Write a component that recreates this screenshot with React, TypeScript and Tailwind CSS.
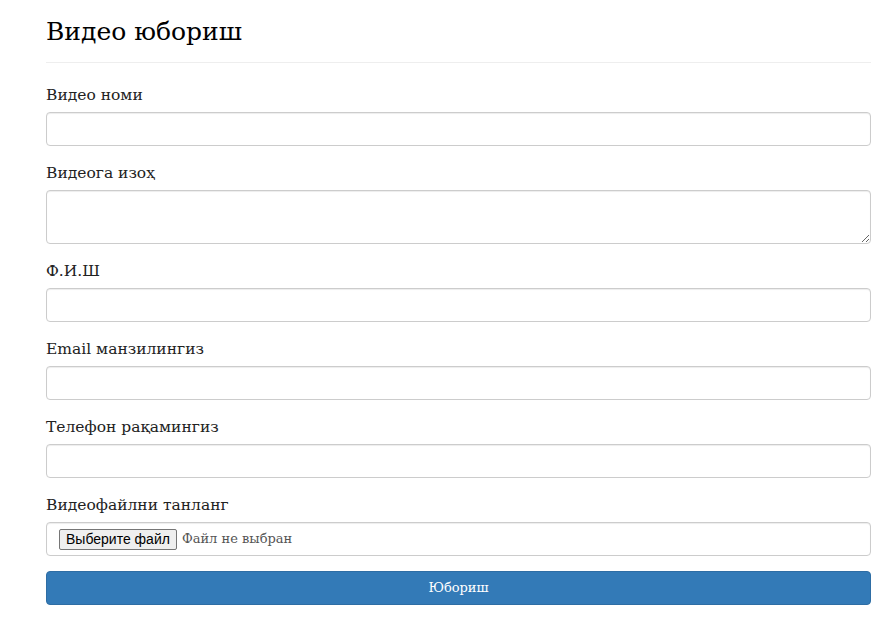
import React from "react";

const serif = { fontFamily: '"DejaVu Serif", "Liberation Serif", serif' };

function Field({ label, children }: { label: string; children: React.ReactNode }) {
  return (
    <div className="mb-[15px]">
      <label className="block mb-[5px] text-[15.5px] leading-[24px] text-[#222]">{label}</label>
      {children}
    </div>
  );
}

const inputCls =
  "block w-full h-[34px] px-3 py-1.5 bg-white border border-[#ccc] rounded-[4px] shadow-[inset_0_1px_1px_rgba(0,0,0,0.075)] text-[14px] text-[#555] outline-none";

export default function App() {
  return (
    <div className="min-h-screen bg-white" style={serif}>
      <div className="pl-[46px] pr-[21px] pt-[15px]">
        <div className="pb-[13px] border-b border-[#eee] mb-[20px]">
          <h2 className="text-[25px] leading-[34px] text-black">Видео юбориш</h2>
        </div>
        <form onSubmit={(e) => e.preventDefault()}>
          <Field label="Видео номи">
            <input type="text" className={inputCls} />
          </Field>
          <Field label="Видеога изоҳ">
            <textarea className="block w-full h-[54px] px-3 py-1.5 bg-white border border-[#ccc] rounded-[4px] shadow-[inset_0_1px_1px_rgba(0,0,0,0.075)] text-[14px] text-[#555] outline-none" />
          </Field>
          <Field label="Ф.И.Ш">
            <input type="text" className={inputCls} />
          </Field>
          <Field label="Email манзилингиз">
            <input type="email" className={inputCls} />
          </Field>
          <Field label="Телефон рақамингиз">
            <input type="tel" className={inputCls} />
          </Field>
          <Field label="Видеофайлни танланг">
            <div className="flex items-center h-[34px] px-3 bg-white border border-[#ccc] rounded-[4px] shadow-[inset_0_1px_1px_rgba(0,0,0,0.075)]">
              <span
                className="inline-flex items-center h-[21px] px-[6px] bg-[#efefef] border border-[#767676] rounded-[2px] text-[14px] text-black"
                style={{ fontFamily: '"Liberation Sans", Arial, sans-serif' }}
              >
                Выберите файл
              </span>
              <span className="ml-[5px] text-[13px] text-[#555]">Файл не выбран</span>
            </div>
          </Field>
          <button
            type="submit"
            className="block w-full h-[34px] bg-[#337ab7] border border-[#2e6da4] rounded-[4px] text-white text-[13px]"
          >
            Юбориш
          </button>
        </form>
      </div>
    </div>
  );
}
